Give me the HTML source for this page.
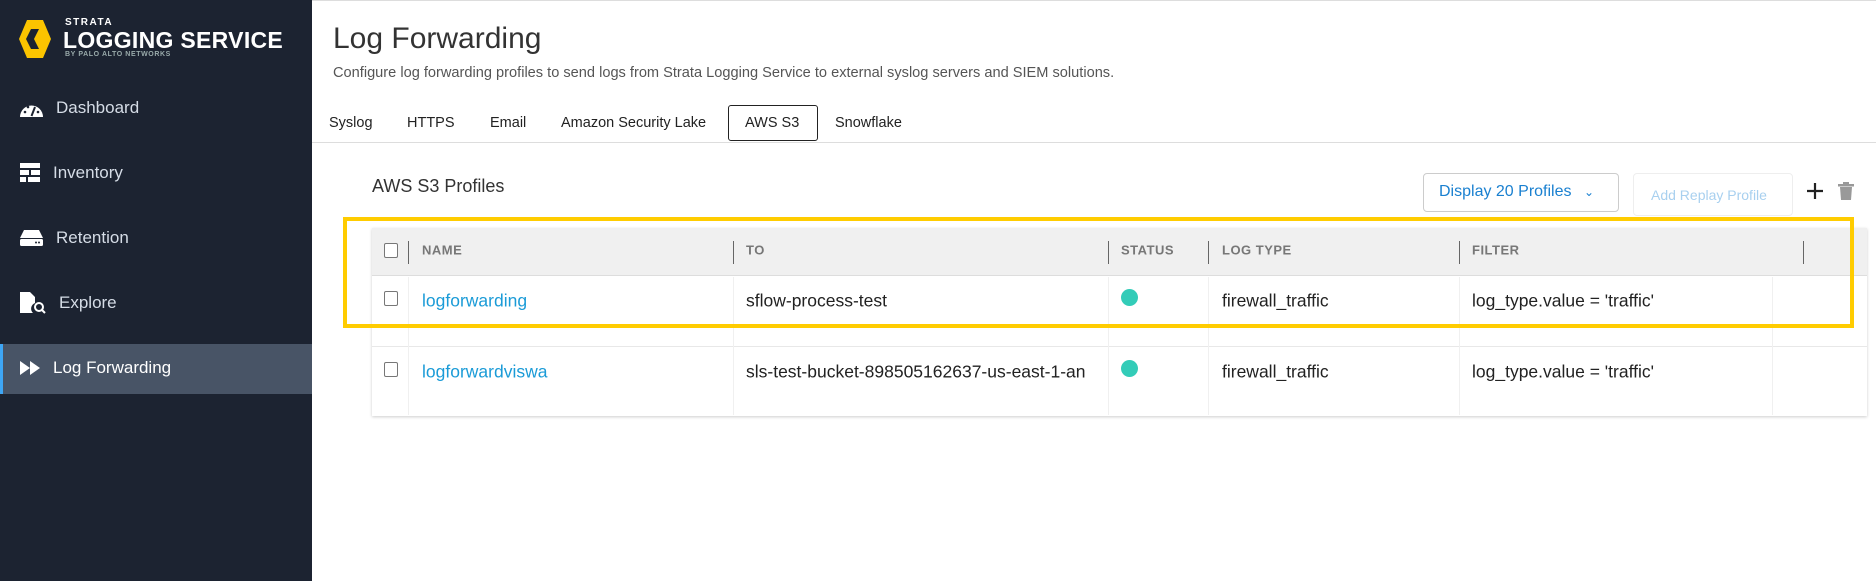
<!DOCTYPE html>
<html><head><style>
*{box-sizing:border-box;margin:0;padding:0}
body{width:1876px;height:581px;position:relative;overflow:hidden;background:#fff;font-family:"Liberation Sans",sans-serif;color:#333}
.a{position:absolute;white-space:nowrap}
.sb{position:absolute;left:0;top:0;width:312px;height:581px;background:#1c2331}
.nav{position:absolute;left:56px;color:#d5dce6;font-size:17px;transform:translateY(-50%)}
.hd{font-size:13px;font-weight:bold;color:#777;letter-spacing:.5px;transform:translateY(-50%)}
.vd{position:absolute;width:1px;background:#666;top:241px;height:23px}
.cd{position:absolute;width:1px;background:#f0f0f0}
.cell{font-size:17.5px;color:#222;transform:translateY(-50%)}
.cb{position:absolute;width:14px;height:15px;border:1.5px solid #777;border-radius:2px;background:#fff}
.dot{position:absolute;width:17px;height:17px;border-radius:50%;background:#33ccb8}
.tab{position:absolute;top:115px;font-size:14.5px;color:#222;white-space:nowrap}
</style></head><body>
<div style="position:absolute;left:0;top:0;width:1876px;height:1px;background:#ddd"></div>
<div class="sb">
<svg class="a" style="left:19px;top:20px" width="32" height="38" viewBox="0 0 32 38"><polygon points="8,0 24,0 32,19 24,38 8,38 0,19" fill="#fbc400"/><polygon points="12,9 20,9 15,19 20,29 12,29 7,19" fill="#1c2331"/></svg>
<div class="a" style="left:65px;top:17px;color:#fff;font-size:10px;font-weight:bold;letter-spacing:1.5px">STRATA</div>
<div class="a" style="left:63px;top:27px;color:#fff;font-size:23px;font-weight:bold;letter-spacing:.3px">LOGGING SERVICE</div>
<div class="a" style="left:65px;top:51px;color:#9aa;font-size:7px;font-weight:bold;letter-spacing:.6px">BY PALO ALTO NETWORKS</div>
<svg class="a" style="left:20px;top:101px" width="23" height="16" viewBox="0 0 23 16"><path d="M0 16A11.5 11.5 0 0 1 23 16Z" fill="#fff"/><path d="M11.5 15L15 6" stroke="#1c2331" stroke-width="2"/><circle cx="5" cy="11" r="1.3" fill="#1c2331"/><circle cx="8" cy="6" r="1.3" fill="#1c2331"/><circle cx="18" cy="11" r="1.3" fill="#1c2331"/></svg>
<div class="nav" style="top:108px">Dashboard</div>
<svg class="a" style="left:20px;top:163px" width="20" height="20" viewBox="0 0 20 20"><rect width="20" height="5" fill="#fff"/><rect y="7" width="9" height="5" fill="#fff"/><rect x="11" y="7" width="9" height="5" fill="#fff"/><rect y="14" width="6" height="5" fill="#fff"/><rect x="8" y="14" width="12" height="5" fill="#fff"/></svg>
<div class="nav" style="top:173px;left:53px">Inventory</div>
<svg class="a" style="left:20px;top:230px" width="23" height="16" viewBox="0 0 23 16"><path d="M4 0H19L23 8H0Z" fill="#fff"/><rect y="9" width="23" height="7" rx="1.5" fill="#fff"/><circle cx="16" cy="12.5" r="1" fill="#1c2331"/><circle cx="19" cy="12.5" r="1" fill="#1c2331"/></svg>
<div class="nav" style="top:238px">Retention</div>
<svg class="a" style="left:20px;top:292px" width="26" height="22" viewBox="0 0 26 22"><path d="M0 0H10L15 5V11A6 6 0 0 0 13 21H0Z" fill="#fff"/><circle cx="19" cy="15" r="4" stroke="#fff" stroke-width="2" fill="none"/><path d="M22 18L25 21" stroke="#fff" stroke-width="2"/></svg>
<div class="nav" style="top:303px;left:59px">Explore</div>
<div style="position:absolute;left:0;top:344px;width:312px;height:50px;background:#485466"></div>
<div style="position:absolute;left:0;top:344px;width:3px;height:50px;background:#3ea6f5"></div>
<svg class="a" style="left:20px;top:361px" width="20" height="14" viewBox="0 0 20 14"><polygon points="0,0 10,7 0,14" fill="#fff"/><polygon points="10,0 20,7 10,14" fill="#fff"/></svg>
<div class="nav" style="top:368px;left:53px;color:#fff">Log Forwarding</div>
</div>
<div class="a" style="left:333px;top:22px;font-size:30px;color:#333">Log Forwarding</div>
<div class="a" style="left:333px;top:65px;font-size:14.6px;color:#555">Configure log forwarding profiles to send logs from Strata Logging Service to external syslog servers and SIEM solutions.</div>
<div style="position:absolute;left:312px;top:142px;width:1564px;height:1px;background:#ddd"></div>
<div class="a" style="left:728px;top:105px;width:90px;height:36px;border:1.5px solid #222;border-radius:3px"></div>
<div class="tab" style="left:329px">Syslog</div>
<div class="tab" style="left:407px">HTTPS</div>
<div class="tab" style="left:490px">Email</div>
<div class="tab" style="left:561px">Amazon Security Lake</div>
<div class="tab" style="left:745px">AWS S3</div>
<div class="tab" style="left:835px">Snowflake</div>
<div class="a" style="left:372px;top:176px;font-size:18px;color:#333">AWS S3 Profiles</div>
<div class="a" style="left:1423px;top:173px;width:196px;height:39px;border:1px solid #ccc;border-radius:4px;color:#1a80d0;font-size:16px;padding:9px 0 0 15px">Display 20 Profiles <span style="font-size:12px;margin-left:8px">&#8964;</span></div>
<div class="a" style="left:1633px;top:173px;width:160px;height:43px;border:1px solid #eee;border-radius:4px;color:#a8d0ef;font-size:14px;padding:13px 0 0 17px">Add Replay Profile</div>
<svg class="a" style="left:1806px;top:182px" width="18" height="18"><path d="M9 1V17M1 9H17" stroke="#222" stroke-width="2.2"/></svg>
<svg class="a" style="left:1838px;top:182px" width="16" height="18" viewBox="0 0 16 18"><rect x="0" y="2" width="16" height="2.5" fill="#999"/><rect x="5" y="0" width="6" height="2" fill="#999"/><path d="M2 5H14L13 18H3Z" fill="#999"/></svg>
<div style="position:absolute;left:372px;top:228px;width:1495px;height:188px;background:#fff;box-shadow:0 1px 3px rgba(0,0,0,.2)"></div>
<div style="position:absolute;left:372px;top:228px;width:1495px;height:48px;background:#f0f0f0;border-bottom:1px solid #ddd"></div>
<div style="position:absolute;left:372px;top:346px;width:1495px;height:1px;background:#e8e8e8"></div>
<div class="cd" style="left:408px;top:277px;height:138px"></div>
<div class="cd" style="left:733px;top:277px;height:138px"></div>
<div class="cd" style="left:1108px;top:277px;height:138px"></div>
<div class="cd" style="left:1208px;top:277px;height:138px"></div>
<div class="cd" style="left:1459px;top:277px;height:138px"></div>
<div class="cd" style="left:1772px;top:277px;height:138px"></div>
<div class="cb" style="left:384px;top:243px"></div>
<div class="vd" style="left:408px"></div><div class="vd" style="left:733px"></div><div class="vd" style="left:1108px"></div><div class="vd" style="left:1208px"></div><div class="vd" style="left:1459px"></div><div class="vd" style="left:1803px"></div>
<div class="a hd" style="left:422px;top:250px">NAME</div>
<div class="a hd" style="left:746px;top:250px">TO</div>
<div class="a hd" style="left:1121px;top:250px">STATUS</div>
<div class="a hd" style="left:1222px;top:250px">LOG TYPE</div>
<div class="a hd" style="left:1472px;top:250px">FILTER</div>
<div class="cb" style="left:384px;top:291px"></div>
<div class="a cell" style="left:422px;top:301px;color:#1a9bd7">logforwarding</div>
<div class="a cell" style="left:746px;top:301px">sflow-process-test</div>
<div class="dot" style="left:1121px;top:289px"></div>
<div class="a cell" style="left:1222px;top:301px">firewall_traffic</div>
<div class="a cell" style="left:1472px;top:301px">log_type.value = 'traffic'</div>
<div class="cb" style="left:384px;top:362px"></div>
<div class="a cell" style="left:422px;top:372px;color:#1a9bd7">logforwardviswa</div>
<div class="a cell" style="left:746px;top:372px">sls-test-bucket-898505162637-us-east-1-an</div>
<div class="dot" style="left:1121px;top:360px"></div>
<div class="a cell" style="left:1222px;top:372px">firewall_traffic</div>
<div class="a cell" style="left:1472px;top:372px">log_type.value = 'traffic'</div>
<div style="position:absolute;left:343px;top:217px;width:1511px;height:111px;border:4px solid #ffcc00"></div>
</body></html>
